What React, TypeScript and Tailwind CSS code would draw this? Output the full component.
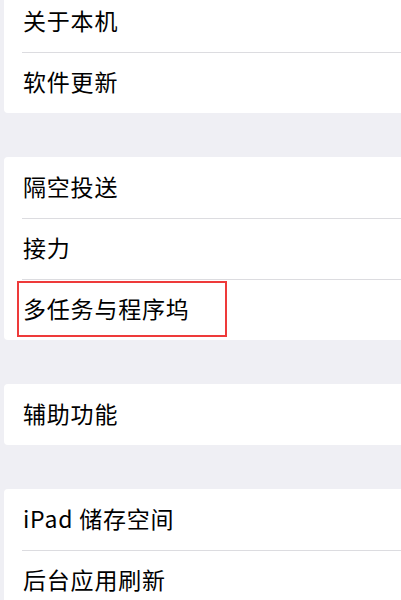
const groups: string[][] = [
  ["关于本机", "软件更新"],
  ["隔空投送", "接力", "多任务与程序坞"],
  ["辅助功能"],
  ["iPad 储存空间", "后台应用刷新"],
]

const Row = ({ label, first, boxed }: { label: string; first: boolean; boxed: boolean }) => (
  <div className="relative flex h-[61px] items-center pb-[2px] pl-[19px]">
    {!first && <div className="absolute left-[18px] right-0 top-0 h-px bg-[#dcdce0]" />}
    <span className="text-[23px] leading-none tracking-[0.8px] text-black">{label}</span>
    {boxed && (
      <div className="absolute left-[13px] top-[2px] h-[56px] w-[210px] border-2 border-[#ee3a3a]" />
    )}
  </div>
)

export default function App() {
  return (
    <div
      className="h-[600px] w-[401px] overflow-hidden bg-[#efeff4] pl-[4px]"
      style={{ fontFamily: '"Noto Sans CJK SC", "Noto Sans", sans-serif' }}
    >
      <div className="-mt-[9px] flex flex-col gap-[44px]">
        {groups.map((g, gi) => (
          <div key={gi} className="rounded-l-[4px] bg-white">
            {g.map((label, i) => (
              <Row key={label} label={label} first={i === 0} boxed={label === "多任务与程序坞"} />
            ))}
          </div>
        ))}
      </div>
    </div>
  )
}
